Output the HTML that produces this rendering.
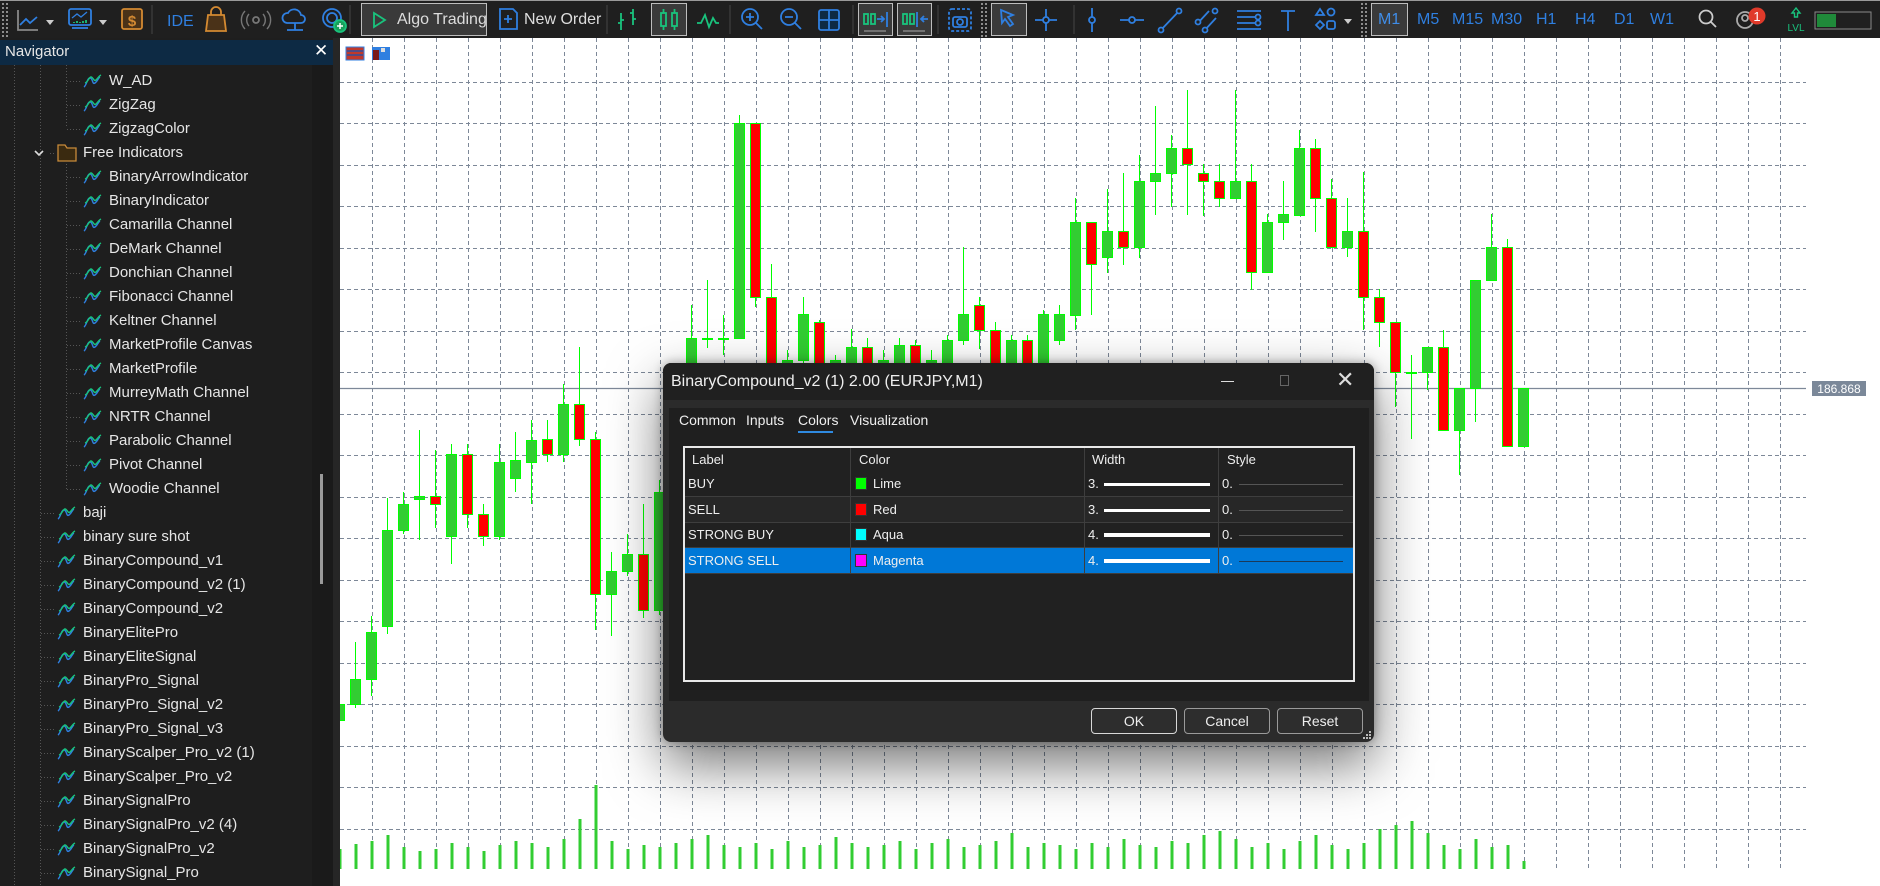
<!DOCTYPE html>
<html><head><meta charset="utf-8">
<style>
*{margin:0;padding:0;box-sizing:border-box}
body{width:1880px;height:886px;overflow:hidden;background:#1e1e1e;font-family:"Liberation Sans Narrow","Liberation Sans",sans-serif;position:relative;color:#ddd}
#tb{position:absolute;left:0;top:0;width:1880px;height:38px;background:#1f1f1f;border-top:1px solid #9a9a9a}
.a{position:absolute}
.box{position:absolute;top:2px;height:33px;border:1px solid #bdbdbd;background:#3a3a3a}
.tf{position:absolute;top:10px;font-size:16px;color:#2f7fe0}
#nav{position:absolute;left:0;top:40px;width:333px;height:846px;background:#1e1e1e;overflow:hidden}
#navh{position:absolute;left:0;top:0;width:333px;height:25px;background:#0d2a44;color:#e6e6e6;font-size:15px;padding:3px 0 0 5px}
.row{position:absolute;height:24px;font-size:15px;color:#e6e6e6;line-height:24px;white-space:nowrap}
#chart{position:absolute;left:340px;top:38px}
#dlg{position:absolute;left:663px;top:363px;width:711px;height:379px;background:#2b2b2b;border-radius:8px;box-shadow:0 22px 55px rgba(0,0,0,.55),0 0 10px rgba(0,0,0,.35);overflow:hidden}
.btn{position:absolute;top:345px;height:26px;border:1px solid #9a9a9a;border-radius:4px;background:#2d2d2d;color:#eee;font-size:14px;text-align:center;line-height:24px}
.td{position:absolute;font-size:13px;color:#eee;line-height:25px}
</style></head><body>
<div id="tb">
<svg class="a" style="left:0;top:0" width="1880" height="37">
<g fill="none" stroke-width="1.8">
<line x1="3" y1="2" x2="3" y2="36" stroke="#999" stroke-dasharray="2,2"/><line x1="7" y1="2" x2="7" y2="36" stroke="#999" stroke-dasharray="2,2"/>
<path d="M18 9V29H38" stroke="#888"/><path d="M20 24l6-6 4 4 7-6" stroke="#2f7fe0"/>
<path d="M46 19h8l-4 5z" fill="#ccc" stroke="none"/>
<rect x="69" y="8" width="22" height="16" rx="2" stroke="#2f7fe0"/><path d="M72 27h16" stroke="#2f7fe0"/><path d="M72 17l5-4 4 3 6-5" stroke="#2f7fe0" stroke-width="1.3"/><path d="M74 21v1M77 20v2M80 21v1M83 20v2M86 19v3" stroke="#19c37d"/>
<path d="M99 19h8l-4 5z" fill="#ccc" stroke="none"/>
<rect x="122" y="8" width="20" height="20" rx="2" stroke="#d48a32" fill="#4a3218"/>
<line x1="152" y1="4" x2="152" y2="33" stroke="#444" stroke-width="1"/>
<path d="M208 14h16l2 16h-20z" stroke="#d48a32" fill="#4a3218"/><path d="M211 14v-3a5 5 0 0 1 10 0v3" stroke="#d48a32"/>
<circle cx="256" cy="19" r="3" stroke="#777"/><path d="M249 13a9 9 0 0 0 0 12M263 13a9 9 0 0 1 0 12M245 10a13 13 0 0 0 0 18M267 10a13 13 0 0 1 0 18" stroke="#777" stroke-width="1.4"/>
<path d="M287 22a5 5 0 0 1 1-10 7 7 0 0 1 13 2 4 4 0 0 1 0 8z" stroke="#2f7fe0"/><path d="M295 22v7M287 29h16" stroke="#2f7fe0"/>
<circle cx="332" cy="17" r="9" stroke="#2f7fe0"/><circle cx="332" cy="17" r="5" stroke="#2f7fe0"/><circle cx="340" cy="25" r="6" fill="#19a05a" stroke="#19c37d"/><path d="M337 25h6M340 22v6" stroke="#fff" stroke-width="1.5"/>
<line x1="350" y1="4" x2="350" y2="33" stroke="#444" stroke-width="1"/>
</g>
<text x="132" y="25" fill="#d48a32" font-size="15" text-anchor="middle" font-family="Liberation Sans" font-weight="bold">$</text>
<text x="167" y="25" fill="#2f7fe0" font-size="16" font-family="Liberation Sans Narrow,Liberation Sans">IDE</text>
</svg>
<div class="box" style="left:361px;width:126px"></div>
<svg class="a" style="left:0;top:0" width="1880" height="37">
<g fill="none" stroke-width="1.8">
<path d="M374 12v14l11-7z" stroke="#19c37d"/>
<path d="M500 8h13l4 4v16h-17z" stroke="#2f7fe0"/><path d="M508 14v8M504 18h8" stroke="#2f7fe0"/>
<line x1="607" y1="4" x2="607" y2="33" stroke="#444" stroke-width="1"/>
<path d="M621 12v17M618 22h3M621 19h3M633 8v16M630 12h3M633 18h3" stroke="#19c37d"/>
<line x1="730" y1="4" x2="730" y2="33" stroke="#444" stroke-width="1"/>
<path d="M697 22h4l4-8 4 12 4-9 3 5h3" stroke="#19c37d"/>
<circle cx="750" cy="16" r="8" stroke="#2f7fe0"/><path d="M746 16h8M750 12v8M756 22l6 6" stroke="#2f7fe0"/>
<circle cx="789" cy="16" r="8" stroke="#2f7fe0"/><path d="M785 16h8M795 22l6 6" stroke="#2f7fe0"/>
<rect x="819" y="9" width="20" height="20" rx="2" stroke="#2f7fe0" fill="#0d2a44"/><path d="M829 9v20M819 19h20" stroke="#2f7fe0"/>
<line x1="853" y1="4" x2="853" y2="33" stroke="#444" stroke-width="1"/>
<line x1="938" y1="4" x2="938" y2="33" stroke="#444" stroke-width="1"/>
<rect x="949" y="8" width="22" height="22" rx="3" stroke="#2f7fe0" stroke-dasharray="3,2"/><rect x="953" y="16" width="14" height="10" rx="2" stroke="#2f7fe0"/><circle cx="960" cy="21" r="3" stroke="#2f7fe0"/>
<line x1="982" y1="2" x2="982" y2="36" stroke="#999" stroke-dasharray="2,2"/><line x1="986" y1="2" x2="986" y2="36" stroke="#999" stroke-dasharray="2,2"/>
</g></svg>
<div style="position:absolute;left:397px;top:10px;font-size:16px;color:#ddd">Algo Trading</div>
<div style="position:absolute;left:524px;top:10px;font-size:16px;color:#ddd">New Order</div>
<div class="box" style="left:651px;width:36px"></div>
<div class="box" style="left:858px;width:35px"></div>
<div class="box" style="left:897px;width:35px"></div>
<div class="box" style="left:991px;width:36px"></div>
<div class="box" style="left:1371px;width:37px"></div>
<svg class="a" style="left:0;top:0" width="1880" height="37">
<g fill="none" stroke-width="1.8">
<rect x="661" y="12" width="5" height="13" stroke="#19c37d"/><path d="M663.5 8v4M663.5 25v4" stroke="#19c37d"/><rect x="672" y="12" width="5" height="13" stroke="#19c37d"/><path d="M674.5 8v4M674.5 25v4" stroke="#19c37d"/>
<rect x="864" y="13" width="4" height="10" stroke="#19c37d"/><rect x="871" y="13" width="4" height="10" stroke="#19c37d"/><path d="M877 18h7M881 15l3 3-3 3M887 11v15" stroke="#2f7fe0"/><path d="M864 30h22" stroke="#aaa" stroke-width="1"/>
<rect x="903" y="13" width="4" height="10" stroke="#19c37d"/><rect x="910" y="13" width="4" height="10" stroke="#19c37d"/><path d="M917 11v15M921 18h7M924 15l-3 3 3 3" stroke="#2f7fe0"/><path d="M903 30h22" stroke="#aaa" stroke-width="1"/>
<path d="M1001 9l12 5-5 2 5 7-3 2-5-7-3 4z" stroke="#2f7fe0"/>
<path d="M1046 8v22M1035 19h22" stroke="#2f7fe0"/><circle cx="1046" cy="19" r="3" stroke="#2f7fe0" fill="#1f1f1f"/>
<line x1="1074" y1="4" x2="1074" y2="33" stroke="#444" stroke-width="1"/>
<path d="M1092 7v24" stroke="#2f7fe0"/><circle cx="1092" cy="19" r="3" stroke="#2f7fe0" fill="#1f1f1f"/>
<path d="M1120 19h24" stroke="#2f7fe0"/><circle cx="1132" cy="19" r="3" stroke="#2f7fe0" fill="#1f1f1f"/>
<path d="M1160 30l20-21" stroke="#2f7fe0"/><circle cx="1161" cy="29" r="2.5" stroke="#2f7fe0" fill="#1f1f1f"/><circle cx="1179" cy="10" r="2.5" stroke="#2f7fe0" fill="#1f1f1f"/>
<path d="M1197 23l12-13M1204 30l12-13" stroke="#2f7fe0"/><circle cx="1198" cy="21" r="2.5" stroke="#2f7fe0" fill="#1f1f1f"/><circle cx="1215" cy="10" r="2.5" stroke="#2f7fe0" fill="#1f1f1f"/><circle cx="1205" cy="29" r="2.5" stroke="#2f7fe0" fill="#1f1f1f"/>
<path d="M1237 10h24M1237 16h20M1237 22h20M1237 28h24" stroke="#2f7fe0"/><circle cx="1258" cy="16" r="2.5" stroke="#2f7fe0" fill="#1f1f1f"/><circle cx="1258" cy="22" r="2.5" stroke="#2f7fe0" fill="#1f1f1f"/>
<path d="M1281 10h14M1288 10v20" stroke="#2f7fe0"/>
<path d="M1316 14l4-6 4 6z" stroke="#2f7fe0"/><circle cx="1331" cy="11" r="3.5" stroke="#2f7fe0"/><path d="M1316 24l4-4 4 4-4 4z" stroke="#2f7fe0"/><rect x="1327" y="20" width="8" height="8" rx="2" stroke="#2f7fe0"/>
<path d="M1344 18h8l-4 5z" fill="#ccc" stroke="none"/>
<line x1="1362" y1="2" x2="1362" y2="36" stroke="#999" stroke-dasharray="2,2"/><line x1="1366" y1="2" x2="1366" y2="36" stroke="#999" stroke-dasharray="2,2"/>
<circle cx="1706" cy="16" r="6.5" stroke="#ccc"/><path d="M1711 21l5 5" stroke="#ccc"/>
<circle cx="1745" cy="19" r="8" stroke="#aaa"/><circle cx="1745" cy="17" r="3" stroke="#aaa"/>
<path d="M1796 7l-4 5h2.5v4h3v-4h2.5z" stroke="#19c37d" stroke-width="1.4"/>
<rect x="1815" y="11" width="56" height="17" stroke="#888" stroke-width="1"/>
</g>
<circle cx="1757" cy="15" r="8.5" fill="#e03a2a"/>
<text x="1757" y="20" fill="#fff" font-size="13" text-anchor="middle" font-family="Liberation Sans">1</text>
<text x="1796" y="30" fill="#19c37d" font-size="10" text-anchor="middle" font-family="Liberation Sans">LVL</text>
<rect x="1817" y="13" width="19" height="13" fill="#1f8a3a"/>
</svg>
<div class="tf" style="left:1378px;color:#3f8de8">M1</div>
<div class="tf" style="left:1417px">M5</div>
<div class="tf" style="left:1452px">M15</div>
<div class="tf" style="left:1491px">M30</div>
<div class="tf" style="left:1536px">H1</div>
<div class="tf" style="left:1575px">H4</div>
<div class="tf" style="left:1614px">D1</div>
<div class="tf" style="left:1650px">W1</div>
</div>

<div id="nav">
<div id="navh">Navigator<span style="position:absolute;left:314px;top:1px;font-size:17px;color:#fff">✕</span></div>
<div style="position:absolute;left:312px;top:25px;width:21px;height:821px;background:#1a1a1a"></div>
<div style="position:absolute;left:320px;top:434px;width:3px;height:110px;background:#9a9a9a"></div>
<svg class="a" style="left:0;top:0" width="312" height="846" id="navsvg"></svg>
<div id="rows"></div>
</div>
<div style="position:absolute;left:333px;top:38px;width:7px;height:848px;background:#262626"></div>

<svg id="chart" width="1540" height="848" viewBox="340 38 1540 848"></svg>

<div id="dlg">
<div style="position:absolute;left:0;top:0;width:711px;height:37px;background:#202020"></div>
<div style="position:absolute;left:8px;top:10px;font-size:16px;color:#eee">BinaryCompound_v2 (1) 2.00 (EURJPY,M1)</div>
<div style="position:absolute;left:558px;top:18px;width:13px;height:1px;background:#ddd"></div>
<div style="position:absolute;left:617px;top:12px;width:9px;height:11px;border:1px solid #666"></div>
<div style="position:absolute;left:673px;top:4px;font-size:22px;color:#ddd;font-family:'Liberation Sans'">✕</div>
<div style="position:absolute;left:6px;top:45px;width:700px;height:293px;background:#1f1f1f"></div>
<div style="position:absolute;left:16px;top:49px;font-size:14px;color:#eee">Common</div>
<div style="position:absolute;left:83px;top:49px;font-size:14px;color:#eee">Inputs</div>
<div style="position:absolute;left:135px;top:49px;font-size:14px;color:#eee">Colors</div>
<div style="position:absolute;left:135px;top:68px;width:35px;height:2px;background:#2f8ae0"></div>
<div style="position:absolute;left:187px;top:49px;font-size:14px;color:#eee">Visualization</div>
<div style="position:absolute;left:20px;top:83px;width:672px;height:236px;border:2px solid #e8e8e8;background:#212121;overflow:hidden">
 <div style="position:absolute;left:0;top:49px;width:670px;height:26px;background:#272727"></div>
 <div style="position:absolute;left:0;top:100px;width:670px;height:25px;background:#0078d7"></div>
 <div style="position:absolute;left:165px;top:0;width:1px;height:125px;background:#3e3e3e"></div>
 <div style="position:absolute;left:399px;top:0;width:1px;height:125px;background:#3e3e3e"></div>
 <div style="position:absolute;left:533px;top:0;width:1px;height:125px;background:#3e3e3e"></div>
 <div style="position:absolute;left:0;top:48px;width:670px;height:1px;background:#3e3e3e"></div>
 <div style="position:absolute;left:0;top:74px;width:670px;height:1px;background:#3e3e3e"></div>
 <div style="position:absolute;left:0;top:99px;width:670px;height:1px;background:#3e3e3e"></div>
 <div style="position:absolute;left:0;top:125px;width:670px;height:1px;background:#3e3e3e"></div>
 <div class="td" style="left:7px;top:-1px">Label</div><div class="td" style="left:174px;top:-1px">Color</div><div class="td" style="left:407px;top:-1px">Width</div><div class="td" style="left:542px;top:-1px">Style</div>
 <div class="td" style="left:3px;top:23px">BUY</div><div class="td" style="left:3px;top:49px">SELL</div><div class="td" style="left:3px;top:74px">STRONG BUY</div><div class="td" style="left:3px;top:100px">STRONG SELL</div>
 <div style="position:absolute;left:170px;top:29px;width:12px;height:13px;background:#00ff00;border:1px solid #333"></div><div class="td" style="left:188px;top:23px">Lime</div>
 <div style="position:absolute;left:170px;top:55px;width:12px;height:13px;background:#ff0000;border:1px solid #333"></div><div class="td" style="left:188px;top:49px">Red</div>
 <div style="position:absolute;left:170px;top:80px;width:12px;height:13px;background:#00ffff;border:1px solid #333"></div><div class="td" style="left:188px;top:74px">Aqua</div>
 <div style="position:absolute;left:170px;top:106px;width:12px;height:13px;background:#ff00ff;border:1px solid #333"></div><div class="td" style="left:188px;top:100px">Magenta</div>
 <div class="td" style="left:403px;top:23px">3.</div><div style="position:absolute;left:419px;top:35px;width:106px;height:3px;background:#fff"></div>
 <div class="td" style="left:403px;top:49px">3.</div><div style="position:absolute;left:419px;top:61px;width:106px;height:3px;background:#fff"></div>
 <div class="td" style="left:403px;top:74px">4.</div><div style="position:absolute;left:419px;top:85px;width:106px;height:4px;background:#fff"></div>
 <div class="td" style="left:403px;top:100px">4.</div><div style="position:absolute;left:419px;top:111px;width:106px;height:4px;background:#fff"></div>
 <div class="td" style="left:537px;top:23px">0.</div><div style="position:absolute;left:554px;top:36px;width:104px;height:1px;background:#555"></div>
 <div class="td" style="left:537px;top:49px">0.</div><div style="position:absolute;left:554px;top:62px;width:104px;height:1px;background:#555"></div>
 <div class="td" style="left:537px;top:74px">0.</div><div style="position:absolute;left:554px;top:87px;width:104px;height:1px;background:#555"></div>
 <div class="td" style="left:537px;top:100px">0.</div><div style="position:absolute;left:554px;top:113px;width:104px;height:1px;background:#1a3a5a"></div>
</div>
<div class="btn" style="left:428px;width:86px;border-color:#d8d8d8">OK</div>
<div class="btn" style="left:521px;width:86px">Cancel</div>
<div class="btn" style="left:614px;width:86px">Reset</div>
<svg class="a" style="left:700px;top:368px" width="10" height="10"><g fill="#bbb"><rect x="6" y="0" width="2" height="2"/><rect x="3" y="3" width="2" height="2"/><rect x="6" y="3" width="2" height="2"/><rect x="0" y="6" width="2" height="2"/><rect x="3" y="6" width="2" height="2"/><rect x="6" y="6" width="2" height="2"/></g></svg>
</div>

<script>
(function(){
var NS="http://www.w3.org/2000/svg";
function el(p,t,a){var e=document.createElementNS(NS,t);for(var k in a)e.setAttribute(k,a[k]);p.appendChild(e);return e;}
var items=[[3,"W_AD"],[3,"ZigZag"],[3,"ZigzagColor"],[1,"Free Indicators"],[3,"BinaryArrowIndicator"],[3,"BinaryIndicator"],[3,"Camarilla Channel"],[3,"DeMark Channel"],[3,"Donchian Channel"],[3,"Fibonacci Channel"],[3,"Keltner Channel"],[3,"MarketProfile Canvas"],[3,"MarketProfile"],[3,"MurreyMath Channel"],[3,"NRTR Channel"],[3,"Parabolic Channel"],[3,"Pivot Channel"],[3,"Woodie Channel"],[2,"baji"],[2,"binary sure shot"],[2,"BinaryCompound_v1"],[2,"BinaryCompound_v2 (1)"],[2,"BinaryCompound_v2"],[2,"BinaryElitePro"],[2,"BinaryEliteSignal"],[2,"BinaryPro_Signal"],[2,"BinaryPro_Signal_v2"],[2,"BinaryPro_Signal_v3"],[2,"BinaryScalper_Pro_v2 (1)"],[2,"BinaryScalper_Pro_v2"],[2,"BinarySignalPro"],[2,"BinarySignalPro_v2 (4)"],[2,"BinarySignalPro_v2"],[2,"BinarySignal_Pro"]];
var ns=document.getElementById("navsvg"),rows=document.getElementById("rows"),h="";
el(ns,"line",{x1:14.5,y1:25,x2:14.5,y2:846,stroke:"#555","stroke-dasharray":"1,2"});
el(ns,"line",{x1:40.5,y1:25,x2:40.5,y2:846,stroke:"#555","stroke-dasharray":"1,2"});
el(ns,"line",{x1:66.5,y1:25,x2:66.5,y2:88,stroke:"#555","stroke-dasharray":"1,2"});
el(ns,"line",{x1:66.5,y1:124,x2:66.5,y2:449,stroke:"#555","stroke-dasharray":"1,2"});
function icon(x,cy){var g=el(ns,"g",{fill:"none","stroke-width":"1.4"});
 el(g,"path",{d:"M"+x+" "+(cy+6)+"c3-2 3-9 6-9s2 7 5 5 3-5 5-6",stroke:"#2f7fe0"});
 el(g,"path",{d:"M"+(x+1)+" "+(cy+2)+"c3-1 4-6 6-6s3 5 5 3 3-4 5-5",stroke:"#19c37d"});}
for(var i=0;i<items.length;i++){var lv=items[i][0],t=items[i][1],tp=29+i*24,cy=tp+12;
 if(lv==3){el(ns,"line",{x1:67,y1:cy+.5,x2:81,y2:cy+.5,stroke:"#555","stroke-dasharray":"1,2"});icon(84,cy);h+='<div class="row" style="left:109px;top:'+tp+'px">'+t+'</div>';}
 else if(lv==2){el(ns,"line",{x1:41,y1:cy+.5,x2:55,y2:cy+.5,stroke:"#555","stroke-dasharray":"1,2"});icon(58,cy);h+='<div class="row" style="left:83px;top:'+tp+'px">'+t+'</div>';}
 else{el(ns,"path",{d:"M35 "+(cy-2)+"l4 4 4-4",stroke:"#ddd",fill:"none","stroke-width":"1.6"});el(ns,"line",{x1:50,y1:cy+.5,x2:56,y2:cy+.5,stroke:"#555","stroke-dasharray":"1,2"});
  el(ns,"path",{d:"M58 "+(cy-8)+"h7l2 3h9v13h-18z",fill:"#3a2a10",stroke:"#c88a3a","stroke-width":"1.3"});h+='<div class="row" style="left:83px;top:'+tp+'px">'+t+'</div>';}
}
rows.innerHTML=h;
var c=document.getElementById("chart");
el(c,"rect",{x:340,y:38,width:1540,height:848,fill:"#fff"});
for(var k=0;k<=44;k++){var x=Math.round(371.5+32*k)+.5;el(c,"line",{x1:x,y1:38,x2:x,y2:870,stroke:"#7d8898","stroke-dasharray":"4,3","stroke-width":1});}
for(var k=0;k<=18;k++){var y=Math.round(81.7+41.5*k)+.5;el(c,"line",{x1:340,y1:y,x2:1806,y2:y,stroke:"#7d8898","stroke-dasharray":"4,3","stroke-width":1});}
el(c,"line",{x1:340,y1:388.5,x2:1806,y2:388.5,stroke:"#7d8898","stroke-width":1.2});
el(c,"rect",{x:1812,y:381,width:54,height:15,fill:"#7b8899"});
var tx=el(c,"text",{x:1839,y:393,fill:"#fff","font-size":"12","text-anchor":"middle","font-family":"Liberation Sans"});tx.textContent="186.868";
el(c,"rect",{x:346,y:47,width:18,height:13,fill:"#c0392b",stroke:"#2f7fe0"});
el(c,"path",{d:"M347 51h16M347 55h16",stroke:"#2f4fa0","stroke-width":1.5});
el(c,"rect",{x:372,y:47,width:18,height:13,fill:"#2f7fe0"});el(c,"rect",{x:373,y:50,width:6,height:10,fill:"#7a1a1a"});el(c,"rect",{x:381,y:48,width:4,height:4,fill:"#ddd"});
var d=[[-25,"G",704,720,704,720],[-24,"G",679,704,642,708],[-23,"G",632,679,616,696],[-22,"G",530,626,498,634],[-21,"G",504,530,492,534],[-20,"G",496,499,430,540],[-19,"R",496,504,450,528],[-18,"G",454,536,444,564],[-17,"R",454,514,444,528],[-16,"R",514,536,504,546],[-15,"G",462,536,444,540],[-14,"G",460,478,432,492],[-13,"G",440,462,420,504],[-12,"R",439,454,420,462],[-11,"G",404,454,384,462],[-10,"R",404,439,347,446],[-9,"R",439,594,432,630],[-8,"G",571,594,552,636],[-7,"G",554,571,534,576],[-6,"R",554,610,504,618],[-5,"G",492,610,480,615],[-4,"G",460,492,450,500],[-3,"G",338,460,305,465],[-2,"G",338,339,280,348],[-1,"G",338,339,315,355],[0,"G",123,338,115,338],[1,"R",123,297,123,307],[2,"R",297,400,264,410],[3,"G",360,400,350,410],[4,"G",314,360,297,365],[5,"R",322,380,320,390],[6,"G",360,380,355,390],[7,"G",347,380,329,390],[8,"R",347,380,338,390],[9,"G",360,380,350,390],[10,"G",345,380,338,390],[11,"R",345,380,340,390],[12,"G",360,380,350,390],[13,"G",340,380,335,390],[14,"G",314,340,247,345],[15,"R",305,330,297,349],[16,"R",330,380,322,390],[17,"G",340,380,335,390],[18,"R",340,370,335,380],[19,"G",314,370,310,380],[20,"G",314,340,305,345],[21,"G",222,315,198,330],[22,"R",222,264,222,315],[23,"G",231,257,189,273],[24,"R",231,247,173,265],[25,"G",181,247,155,258],[26,"G",173,181,106,215],[27,"G",148,173,135,207],[28,"R",148,164,90,215],[29,"R",173,181,164,216],[30,"R",181,198,164,207],[31,"G",181,198,90,198],[32,"R",181,272,164,290],[33,"G",222,272,214,272],[34,"G",214,222,181,240],[35,"G",148,215,130,215],[36,"R",148,198,139,232],[37,"R",198,247,179,247],[38,"G",231,247,198,257],[39,"R",231,297,172,330],[40,"R",297,322,289,347],[41,"R",322,372,322,407],[42,"G",372,373,355,439],[43,"G",347,372,347,390],[44,"R",347,430,330,430],[45,"G",388,430,388,475],[46,"G",280,388,280,422],[47,"G",247,280,214,280],[48,"R",247,446,239,446],[49,"G",388,446,388,446]];
var vol=[20,25,28,34,22,18,20,26,22,18,24,28,26,22,30,50,84,28,20,24,22,26,30,34,24,22,26,20,28,22,24,32,26,22,24,28,20,26,30,22,24,28,36,22,26,24,20,26,22,30,24,22,28,26,34,38,30,22,26,20,28,34,24,20,26,40,44,48,36,24,20,30,22,24,8];
for(var i=0;i<d.length;i++){var r=d[i],cx=739+16*r[0];
 el(c,"line",{x1:cx+.5,y1:r[4],x2:cx+.5,y2:r[5],stroke:"#00ff00","stroke-width":1});
 var hh=Math.max(r[3]-r[2],1);
 el(c,"rect",{x:cx-4.5,y:r[2]+.5,width:10,height:hh,fill:r[1]=="G"?"#32cd32":"#ff0000",stroke:"#00ff00","stroke-width":1});
 var v=vol[i]||20;el(c,"rect",{x:cx-0.5,y:869-v,width:3,height:v,fill:"#32cd32"});
}
})();
</script>
</body></html>
